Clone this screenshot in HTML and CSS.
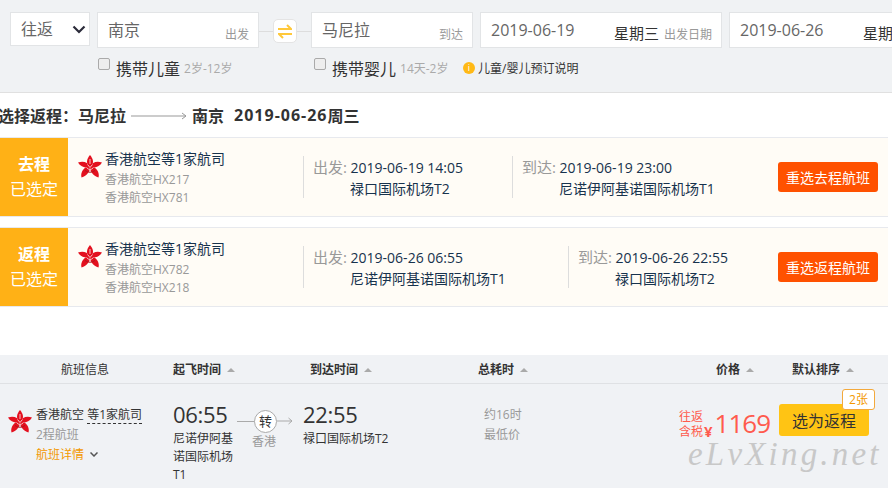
FILE: index.html
```html
<!DOCTYPE html>
<html lang="zh">
<head>
<meta charset="utf-8">
<title>选择返程</title>
<link rel="stylesheet" href="styles.css">
</head>
<body>
<svg class="defs" width="0" height="0" aria-hidden="true">
  <symbol id="logo" viewBox="0 0 24 23">
    <g fill="#e3101f">
      <path d="M12 12C7.500 9 8.500 4 12 0C15.500 4 16.500 9 12 12Z"/>
      <path d="M12 12C8 13.500 2.500 12 0 7.500C5 5.500 10 7 12 12Z"/>
      <path d="M12 12C16 13.500 21.500 12 24 7.500C19 5.500 14 7 12 12Z"/>
      <path d="M12 11C12.500 16 9 21 3.500 22.500C2 17.500 6 11.500 12 11Z"/>
      <path d="M12 11C11.500 16 15 21 20.500 22.500C22 17.500 18 11.500 12 11Z"/>
    </g>
    <path d="M8.500 12.500Q12 16.500 15.500 12.500M9.500 9.500L12 12.500L14.500 9.500M12 4V9" fill="none" stroke="#f8c4c4" stroke-width="1"/>
    <path d="M7 15.500Q12 19 17 15.500" fill="none" stroke="#b0101c" stroke-width="1"/>
  </symbol>
</svg>

<section class="search">
  <div class="search-row">
    <div class="field trip"><span>往返</span>
      <svg class="chev" width="14" height="9" viewBox="0 0 14 9"><path d="M1.500 1.500L7 7L12.500 1.500" fill="none" stroke="#2b2b3a" stroke-width="2.200"/></svg>
    </div>
    <div class="field city"><span>南京</span><small>出发</small></div>
    <div class="swap-wrap">
      <div class="swap">
        <svg width="14" height="15" viewBox="0 0 14 15"><path d="M0 5H13L9 1M14 10H1L5 14" fill="none" stroke="#ffc83a" stroke-width="2"/></svg>
      </div>
    </div>
    <div class="field city"><span>马尼拉</span><small>到达</small></div>
    <div class="field date"><span class="num">2019-06-19</span><em>星期三</em><small>出发日期</small></div>
    <div class="field date"><span class="num">2019-06-26</span><em>星期三</em><small>返回日期</small></div>
  </div>
  <div class="option-row">
    <label class="opt opt-child"><i class="check"></i><b>携带儿童</b><small>2岁-12岁</small></label>
    <label class="opt opt-infant"><i class="check"></i><b>携带婴儿</b><small>14天-2岁</small></label>
    <div class="note"><i class="info">i</i>儿童/婴儿预订说明</div>
  </div>
</section>

<h1 class="route"><span>选择返程：马尼拉</span><svg width="57" height="8" viewBox="0 0 57 8"><path d="M0 4H55M51 1L55 4L51 7" fill="none" stroke="#999" stroke-width="1"/></svg><span>南京</span><span class="route-date">2019-06-26</span><span>周三</span></h1>

<article class="leg leg-first">
  <div class="badge"><strong>去程</strong><span>已选定</span></div>
  <svg class="logo" width="24" height="23"><use href="#logo"/></svg>
  <div class="carrier">
    <p class="carrier-name">香港航空等1家航司</p>
    <p class="carrier-sub">香港航空HX217</p>
    <p class="carrier-sub">香港航空HX781</p>
  </div>
  <div class="stop stop-a">
    <p><span class="lab">出发:</span> 2019-06-19 14:05</p>
    <p class="port">禄口国际机场T2</p>
  </div>
  <div class="stop stop-b">
    <p><span class="lab">到达:</span> 2019-06-19 23:00</p>
    <p class="port">尼诺伊阿基诺国际机场T1</p>
  </div>
  <button class="redo">重选去程航班</button>
</article>

<article class="leg">
  <div class="badge"><strong>返程</strong><span>已选定</span></div>
  <svg class="logo" width="24" height="23"><use href="#logo"/></svg>
  <div class="carrier">
    <p class="carrier-name">香港航空等1家航司</p>
    <p class="carrier-sub">香港航空HX782</p>
    <p class="carrier-sub">香港航空HX218</p>
  </div>
  <div class="stop stop-c">
    <p><span class="lab">出发:</span> 2019-06-26 06:55</p>
    <p class="port">尼诺伊阿基诺国际机场T1</p>
  </div>
  <div class="stop stop-d">
    <p><span class="lab">到达:</span> 2019-06-26 22:55</p>
    <p class="port">禄口国际机场T2</p>
  </div>
  <button class="redo">重选返程航班</button>
</article>

<section class="results">
  <div class="thead">
    <span class="th th-info">航班信息</span>
    <b class="th th-dep">起飞时间<i class="tri"></i></b>
    <b class="th th-arr">到达时间<i class="tri"></i></b>
    <b class="th th-dur">总耗时<i class="tri"></i></b>
    <b class="th th-price">价格<i class="tri"></i></b>
    <b class="th th-sort">默认排序<i class="tri"></i></b>
  </div>
  <div class="flight">
    <svg class="logo-sm" width="24" height="23"><use href="#logo"/></svg>
    <div class="f-info">
      <p>香港航空 <span class="dotted">等1家航司</span></p>
      <p class="grey">2程航班</p>
      <p class="detail">航班详情
        <svg width="8" height="5" viewBox="0 0 8 5"><path d="M0.500 0.500L4 4L7.500 0.500" fill="none" stroke="#555" stroke-width="1.500"/></svg>
      </p>
    </div>
    <div class="f-time f-dep">
      <div class="clock">06:55</div>
      <p>尼诺伊阿基诺国际机场T1</p>
    </div>
    <div class="f-via">
      <div class="via-line"><span class="via-dot">转</span>
        <svg class="via-arrow" width="16" height="8" viewBox="0 0 16 8"><path d="M0 4H15M11.500 1L15 4L11.500 7" fill="none" stroke="#aaa"/></svg>
      </div>
      <p class="grey">香港</p>
    </div>
    <div class="f-time f-arr">
      <div class="clock">22:55</div>
      <p>禄口国际机场T2</p>
    </div>
    <div class="f-dur grey">
      <p>约16时</p>
      <p>最低价</p>
    </div>
    <div class="f-price">
      <div class="tax">往返<br>含税</div><span class="yen">¥</span><span class="amount">1169</span>
    </div>
    <div class="f-action">
      <span class="tickets">2张</span>
      <button class="select">选为返程</button>
    </div>
    <div class="mark">eLvXing.net</div>
  </div>
</section>
</body>
</html>
```
FILE: styles.css
```css
* { box-sizing: border-box; }
html, body { margin: 0; height: 488px; overflow: hidden; }
body {
  background: #fff;
  width: 892px;
  font-family: "Open Sans", "Noto Sans CJK SC", sans-serif;
  font-size: 12px;
  color: #333;
}
p, h1 { margin: 0; }
.defs { position: absolute; }

.search {
  height: 93px;
  background: #f0f2f4;
  border-bottom: 1px solid #e0e0e0;
  padding: 12px 0 0 10px;
  overflow: hidden;
}
.search-row { display: flex; align-items: flex-start; width: 1000px; }
.field {
  background: #fff;
  border: 1px solid #e2e4e6;
  height: 36px;
  display: flex;
  align-items: center;
  flex: none;
  color: #666;
  font-size: 16px;
  padding-left: 10px;
  position: relative;
}
.field span { line-height: 32px; margin-top: -1px; }
.field small { color: #999; font-size: 12px; position: absolute; right: 9px; bottom: 4px; line-height: 16px; }
.trip { width: 80px; height: 34px; margin-right: 7px; justify-content: space-between; padding-right: 3px; }
.chev { flex: none; margin-top: 1px; }
.city { width: 162px; }
.date { width: 242px; margin-left: 7px; }
.date .num { font-size: 16px; color: #666; }
.date em { position: absolute; left: 133px; bottom: 5px; font-style: normal; font-size: 15px; line-height: 18px; color: #333; }
.swap-wrap {
  width: 52px;
  height: 36px;
  margin-top: 1px;
  display: flex;
  align-items: center;
  justify-content: center;
  background: linear-gradient(#ddd, #ddd) center / 100% 1px no-repeat;
  flex: none;
}
.swap {
  width: 24px;
  height: 24px;
  background: #fff;
  border: 1px solid #e4e4e4;
  border-radius: 5px;
  display: flex;
  align-items: center;
  justify-content: center;
}
.option-row { display: flex; align-items: center; height: 20px; margin-top: 9px; }
.opt { display: flex; align-items: center; }
.opt b { font-weight: 400; font-size: 16px; color: #333; margin-left: 6px; margin-top: -1px; }
.opt small { font-size: 12px; color: #aaa; margin-left: 4px; }
.opt-child { margin-left: 88px; width: 216px; }
.opt-infant { width: 149px; }
.check {
  width: 12px;
  height: 12px;
  border: 1px solid #aaa;
  border-radius: 2px;
  background: #eee;
  margin-top: -8px;
}
.note { display: flex; align-items: center; font-size: 12px; color: #333; }
.info {
  width: 12px;
  height: 12px;
  border-radius: 50%;
  background: #ffb916;
  color: #fff;
  font-size: 9px;
  font-style: normal;
  line-height: 12px;
  text-align: center;
  margin-right: 3px;
}

.route {
  height: 44px;
  margin-left: -2px;
  display: flex;
  align-items: center;
  font-size: 16px;
  font-weight: 700;
  color: #333;
  white-space: nowrap;
}
.route svg { margin: 1px 4px 0 5px; flex: none; }
.route-date { margin-left: 10px; letter-spacing: 1px; }

.leg {
  width: 888px;
  height: 80px;
  background: #fffcf6;
  border-top: 1px solid #e7e9ee;
  border-bottom: 1px solid #e7e9ee;
  display: flex;
  align-items: center;
  margin-bottom: 10px;
}
.badge {
  width: 68px;
  height: 78px;
  background: #ffb116;
  color: #fff;
  display: flex;
  flex-direction: column;
  align-items: center;
  justify-content: center;
  font-size: 16px;
  flex: none;
}
.badge strong { line-height: 25px; font-size: 16px; }
.badge span { line-height: 25px; }
.logo { margin: -21px 4px 0 10px; flex: none; }
.carrier { width: 197px; flex: none; align-self: flex-start; padding-top: 11px; margin-left: -1px; margin-right: 1px; }
.carrier-name { font-size: 14px; line-height: 20px; color: #17324d; margin-bottom: 2px; }
.carrier-sub { font-size: 12px; line-height: 18px; color: #999; }
.stop {
  flex: none;
  height: 42px;
  border-left: 1px solid #ddd;
  padding-left: 9px;
  font-size: 14px;
  line-height: 22px;
  color: #17324d;
  white-space: nowrap;
  margin-top: -1px;
}
.lab { color: #999; font-size: 15px; }
.port { padding-left: 37px; font-size: 14px; margin-top: -1px; }
.stop-a { width: 209px; }
.stop-b { width: 266px; }
.stop-c { width: 265px; }
.stop-d { width: 210px; }
.redo {
  width: 100px;
  height: 30px;
  border: 0;
  border-radius: 3px;
  background: #ff5100;
  color: #fff;
  font: inherit;
  font-size: 14px;
  padding: 0;
  flex: none;
}

.results { width: 888px; margin-top: 48px; background: #f0f2f5; }
.thead { height: 29px; border-bottom: 1px solid #dfe1e4; display: grid; grid-template-columns: 61px 112px 137px 168px 238px 76px 1fr; align-items: center; line-height: 29px; }
.th { grid-row: 1; white-space: nowrap; color: #333; }
.th-info { grid-column: 2; }
.th-dep { grid-column: 3; }
.th-arr { grid-column: 4; }
.th-dur { grid-column: 5; }
.th-price { grid-column: 6; }
.th-sort { grid-column: 7; }
.tri {
  display: inline-block;
  width: 0;
  height: 0;
  border: 4px solid transparent;
  border-top: 0;
  border-bottom: 4px solid #aaa;
  margin: 0 0 2px 6px;
  vertical-align: middle;
}
.flight { position: relative; height: 105px; display: flex; align-items: flex-start; }
.logo-sm { margin: 26px 4px 0 8px; flex: none; }
.f-info { width: 137px; flex: none; padding-top: 21px; line-height: 20px; white-space: nowrap; }
.dotted { border-bottom: 1px dashed #333; }
.grey { color: #999; }
.detail { color: #f39800; }
.detail svg { margin-left: 3px; vertical-align: 2px; }
.f-time { flex: none; padding-top: 14px; }
.clock { font-size: 22px; line-height: 32px; color: #333; letter-spacing: -0.3px; }
.f-time p { line-height: 18px; }
.f-dep { width: 64px; }
.f-via { width: 66px; flex: none; padding-top: 26px; text-align: center; }
.via-line {
  height: 22px;
  display: flex;
  align-items: center;
  justify-content: flex-start;
  background: linear-gradient(#aaa, #aaa) 0 center / 20px 1px no-repeat;
  padding-left: 17px;
}
.via-dot {
  width: 23px;
  height: 23px;
  border: 1px solid #aaa;
  border-radius: 50%;
  background: #fff;
  line-height: 21px;
  font-size: 13px;
  color: #333;
  flex: none;
}
.via-arrow { flex: none; }
.f-via .grey { line-height: 20px; margin-top: 0; padding-right: 12px; }
.f-arr { width: 181px; }
.f-dur { width: 195px; flex: none; padding-top: 21px; line-height: 20px; }
.f-price { width: 100px; flex: none; display: flex; align-items: flex-end; color: #ff5a4d; padding-top: 25px; }
.tax { line-height: 15px; font-size: 12px; }
.yen { font-size: 15px; font-weight: 700; line-height: 15px; margin-left: 1px; }
.amount { font-size: 26px; line-height: 28px; margin: 0 0 2px 2px; letter-spacing: -1px; }
.f-action { position: relative; padding-top: 20px; flex: none; }
.select {
  width: 90px;
  height: 32px;
  border: 0;
  border-radius: 3px;
  background: #ffc414;
  color: #333;
  font: inherit;
  font-size: 16px;
  padding: 0;
}
.tickets {
  position: absolute;
  left: 63px;
  top: 5px;
  width: 33px;
  height: 21px;
  background: #fff;
  border: 1px solid #f3a93c;
  border-radius: 3px;
  color: #f39800;
  text-align: center;
  line-height: 19px;
  font-size: 12px;
  z-index: 1;
}
.mark {
  position: absolute;
  left: 688px;
  top: 52px;
  font-family: "Liberation Serif", serif;
  font-style: italic;
  font-size: 33px;
  line-height: 36px;
  letter-spacing: 3.200px;
  color: #c8c8c8;
  white-space: nowrap;
}
```
